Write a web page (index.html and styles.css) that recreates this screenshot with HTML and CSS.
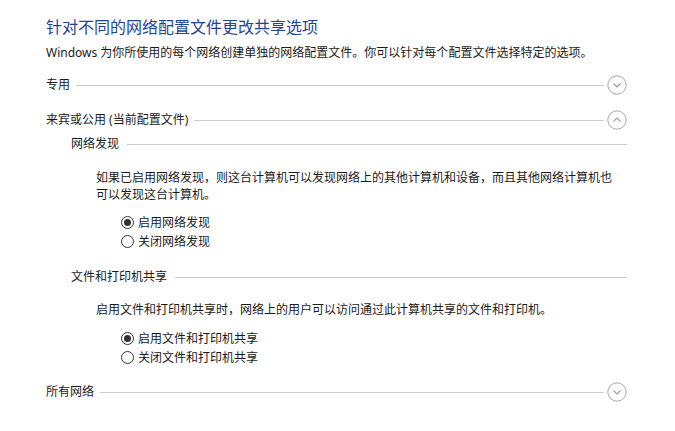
FILE: index.html
```html
<!DOCTYPE html>
<html lang="zh-CN">
<head>
<meta charset="utf-8">
<title>高级共享设置</title>
<link rel="stylesheet" href="styles.css">
</head>
<body>
<div class="page">
  <h1 class="title">针对不同的网络配置文件更改共享选项</h1>
  <p class="desc">Windows 为你所使用的每个网络创建单独的网络配置文件。你可以针对每个配置文件选择特定的选项。</p>

  <div class="group-header first">
    <span class="label">专用</span>
    <span class="rule"></span>
    <svg class="toggle" width="20" height="20" viewBox="0 0 20 20"><circle cx="10" cy="10" r="9.2" fill="none" stroke="#a6a6a6" stroke-width="1"/><path d="M6.5 8.5 L10 12 L13.5 8.5" fill="none" stroke="#9a9a9a" stroke-width="1.1"/></svg>
  </div>

  <div class="group-header second">
    <span class="label">来宾或公用 (当前配置文件)</span>
    <span class="rule"></span>
    <svg class="toggle" width="20" height="20" viewBox="0 0 20 20"><circle cx="10" cy="10" r="9.2" fill="none" stroke="#a6a6a6" stroke-width="1"/><path d="M6.5 11.5 L10 8 L13.5 11.5" fill="none" stroke="#9a9a9a" stroke-width="1.1"/></svg>
  </div>

  <div class="section">
    <div class="sub-header">
      <span class="label">网络发现</span>
      <span class="rule"></span>
    </div>
    <p class="info wrap">如果已启用网络发现，则这台计算机可以发现网络上的其他计算机和设备，而且其他网络计算机也可以发现这台计算机。</p>
    <div class="options">
      <label class="option"><span class="radio checked"></span>启用网络发现</label>
      <label class="option"><span class="radio"></span>关闭网络发现</label>
    </div>
  </div>

  <div class="section second-section">
    <div class="sub-header">
      <span class="label">文件和打印机共享</span>
      <span class="rule"></span>
    </div>
    <p class="info single">启用文件和打印机共享时，网络上的用户可以访问通过此计算机共享的文件和打印机。</p>
    <div class="options">
      <label class="option"><span class="radio checked"></span>启用文件和打印机共享</label>
      <label class="option"><span class="radio"></span>关闭文件和打印机共享</label>
    </div>
  </div>

  <div class="group-header last">
    <span class="label">所有网络</span>
    <span class="rule short"></span>
    <svg class="toggle" width="20" height="20" viewBox="0 0 20 20"><circle cx="10" cy="10" r="9.2" fill="none" stroke="#a6a6a6" stroke-width="1"/><path d="M6.5 8.5 L10 12 L13.5 8.5" fill="none" stroke="#9a9a9a" stroke-width="1.1"/></svg>
  </div>
</div>
</body>
</html>
```

FILE: styles.css
```css
html, body {
  margin: 0;
  padding: 0;
  background: #ffffff;
}

body {
  font-family: "Noto Sans", "Noto Sans CJK SC", sans-serif;
  font-size: 12px;
  color: #1a1a1a;
}

.page {
  width: 581px;
  padding: 17px 0 0 46px;
}

.title {
  margin: 0;
  font-size: 16px;
  line-height: 20px;
  font-weight: normal;
  color: #1f4496;
}

.desc {
  margin: 8px 0 0 0;
  line-height: 16px;
}

.group-header {
  display: flex;
  align-items: center;
  height: 20px;
}

.group-header.first { margin-top: 14px; }
.group-header.second { margin-top: 15px; }
.group-header.last { margin-top: 15px; }

.group-header .label {
  line-height: 20px;
  white-space: nowrap;
}

.group-header .rule {
  flex: 1;
  height: 1px;
  background: #cccccc;
  margin-left: 6px;
  margin-right: 3px;
}

.toggle {
  display: block;
  flex: none;
}

.section {
  padding-left: 25px;
  margin-top: 6px;
}

.second-section {
  margin-top: 18px;
}

.sub-header {
  display: flex;
  align-items: center;
  height: 16px;
}

.sub-header .label {
  line-height: 16px;
  white-space: nowrap;
}

.sub-header .rule {
  flex: 1;
  height: 1px;
  background: #cccccc;
  margin-left: 8px;
}

.info {
  margin: 17px 0 0 25px;
  line-height: 17px;
}

.info.wrap {
  width: 522px;
}

.second-section .info {
  margin-top: 16px;
}

.options {
  margin: 10px 0 0 50px;
}

.second-section .options {
  margin-top: 11px;
}

.option {
  display: flex;
  align-items: center;
  height: 19px;
  line-height: 19px;
  white-space: nowrap;
}

.radio {
  box-sizing: border-box;
  width: 13px;
  height: 13px;
  border: 1px solid #333333;
  border-radius: 50%;
  margin-right: 4px;
  position: relative;
  flex: none;
}

.radio.checked::after {
  content: "";
  position: absolute;
  left: 2px;
  top: 2px;
  width: 7px;
  height: 7px;
  border-radius: 50%;
  background: #333333;
}
```
